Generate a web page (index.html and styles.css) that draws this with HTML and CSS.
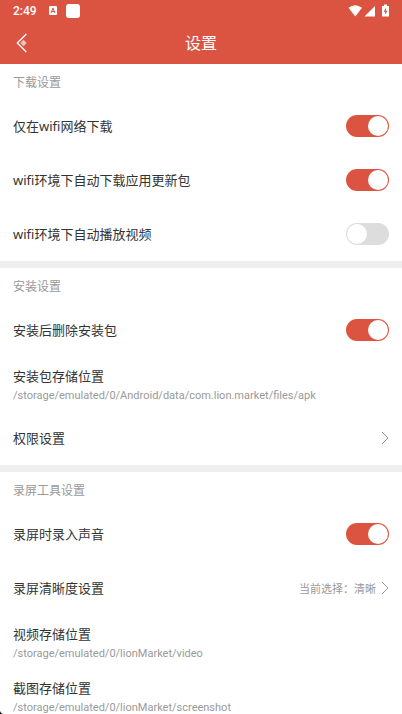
FILE: index.html
```html
<!DOCTYPE html>
<html lang="zh-CN">
<head>
<meta charset="utf-8">
<meta name="viewport" content="width=device-width, initial-scale=1">
<title>设置</title>
<link rel="stylesheet" href="styles.css">
</head>
<body>
<div class="status">
  <span class="clock">2:49</span>
  <svg class="status-lang" width="8" height="10" viewBox="0 0 8 10" aria-hidden="true"><rect width="8" height="9" rx="1" fill="#fff"/><path d="M2 7 4 2 6 7M2.700 5.500h2.600" fill="none" stroke="#db5442" stroke-width="1"/></svg>
  <span class="status-app"></span>
  <svg class="status-system" width="42" height="14" viewBox="0 0 42 14" aria-hidden="true">
    <path d="M1.500 3.800Q8-1.200 15 3.800L8.300 12.500Z" fill="#fff"/>
    <path d="M28 2V12.500H17.500Z" fill="#fff"/>
    <path d="M35 2h2V.500h3V2h2v10.500h-7Z" fill="#fff"/>
    <path d="M39 3.800 36.700 7.800h1.500V10.800L40.500 6.800H39Z" fill="#db5442"/>
  </svg>
</div>
<header class="appbar">
  <button class="back" type="button" aria-label="返回">
    <svg width="12" height="20" viewBox="0 0 12 20" aria-hidden="true"><path d="M7.500 6.800 10.700 10 7.500 13.200 4.300 10Z" fill="#fff" opacity=".65"/><path d="M10.300 1 1.300 10l9 9" fill="none" stroke="#fff" stroke-width="1.300"/></svg>
  </button>
  <h1 class="title">设置</h1>
</header>
<main class="settings">
  <section class="group">
    <h2 class="group-title">下载设置</h2>
    <label class="row"><span class="name">仅在wifi网络下载</span><input class="switch" type="checkbox" checked></label>
    <label class="row"><span class="name">wifi环境下自动下载应用更新包</span><input class="switch" type="checkbox" checked></label>
    <label class="row"><span class="name">wifi环境下自动播放视频</span><input class="switch" type="checkbox"></label>
  </section>
  <section class="group">
    <h2 class="group-title">安装设置</h2>
    <label class="row"><span class="name">安装后删除安装包</span><input class="switch" type="checkbox" checked></label>
    <button class="row stacked" type="button"><span class="name">安装包存储位置</span><span class="path">/storage/emulated/0/Android/data/com.lion.market/files/apk</span></button>
    <button class="row" type="button"><span class="name">权限设置</span><svg class="chevron" width="8" height="14" viewBox="0 0 8 14" aria-hidden="true"><path d="M1 1l6 6-6 6"/></svg></button>
  </section>
  <section class="group">
    <h2 class="group-title">录屏工具设置</h2>
    <label class="row"><span class="name">录屏时录入声音</span><input class="switch" type="checkbox" checked></label>
    <button class="row" type="button"><span class="name">录屏清晰度设置</span><span class="value">当前选择：清晰</span><svg class="chevron" width="8" height="14" viewBox="0 0 8 14" aria-hidden="true"><path d="M1 1l6 6-6 6"/></svg></button>
    <button class="row stacked" type="button"><span class="name">视频存储位置</span><span class="path">/storage/emulated/0/lionMarket/video</span></button>
    <button class="row stacked" type="button"><span class="name">截图存储位置</span><span class="path">/storage/emulated/0/lionMarket/screenshot</span></button>
  </section>
</main>
<svg class="corner" width="3" height="3" viewBox="0 0 3 3" aria-hidden="true"><path d="M0 0Q.5 2.500 3 3H0Z"/></svg>
</body>
</html>
```
FILE: styles.css
```css
:root {
  --accent: #db5442;
  --edge: 13px;
}

* {
  box-sizing: border-box;
}

body {
  display: flex;
  flex-direction: column;
  height: 100vh;
  margin: 0;
  background: #fff;
  color: #333;
  font-family: "Noto Sans", "Noto Sans CJK SC", sans-serif;
}

button {
  border: 0;
  background: none;
  color: inherit;
  font: inherit;
  text-align: left;
}

svg {
  display: block;
  flex: none;
}

.status {
  display: flex;
  flex: none;
  align-items: center;
  height: 22px;
  padding: 0 var(--edge);
  background: var(--accent);
  color: #fff;
}

.clock {
  font: 500 12px/22px Roboto, sans-serif;
}

.status-lang {
  margin-left: 12px;
}

.status-app {
  width: 14px;
  height: 14px;
  margin-left: 9px;
  border-radius: 3px;
  background: #fff;
}

.status-system {
  margin-left: auto;
}

.appbar {
  display: grid;
  flex: none;
  grid-template-columns: 44px 1fr 44px;
  align-items: center;
  height: 42px;
  background: var(--accent);
  color: #fff;
}

.back {
  height: 42px;
  padding: 0 16px;
}

.title {
  margin: 0;
  font-size: 16px;
  font-weight: 400;
  line-height: 24px;
  text-align: center;
}

.settings {
  flex: 1;
  min-height: 0;
  overflow-y: auto;
  scrollbar-width: none;
}

.group + .group {
  border-top: 7px solid #eee;
}

.group-title {
  margin: 0;
  padding: 2px var(--edge) 0;
  color: #999;
  font-size: 12px;
  font-weight: 400;
  line-height: 33px;
}

.row {
  display: flex;
  align-items: center;
  width: 100%;
  height: 54px;
  padding: 0 var(--edge);
}

.name {
  flex: 1;
  font-size: 13px;
  line-height: 20px;
}

.stacked {
  flex-direction: column;
  align-items: flex-start;
  justify-content: center;
  padding-top: 4px;
}

.stacked .name {
  flex: none;
}

.path {
  color: #999;
  font: 11px/20px Roboto, sans-serif;
}

.value {
  margin-right: 5px;
  color: #999;
  font-size: 11px;
}

.chevron path {
  fill: none;
  stroke: #999;
}

.switch {
  display: flex;
  flex: none;
  width: 43px;
  height: 22px;
  margin: 0;
  padding: 1px;
  border-radius: 11px;
  background: #ddd;
  appearance: none;
}

.switch::before {
  width: 20px;
  height: 20px;
  border-radius: 50%;
  background: #fff;
  content: "";
}

.switch:checked {
  justify-content: flex-end;
  background: var(--accent);
}

/* Rounded display corner over the scrolling list */
.corner {
  position: fixed;
  bottom: 0;
  left: 0;
}
```
